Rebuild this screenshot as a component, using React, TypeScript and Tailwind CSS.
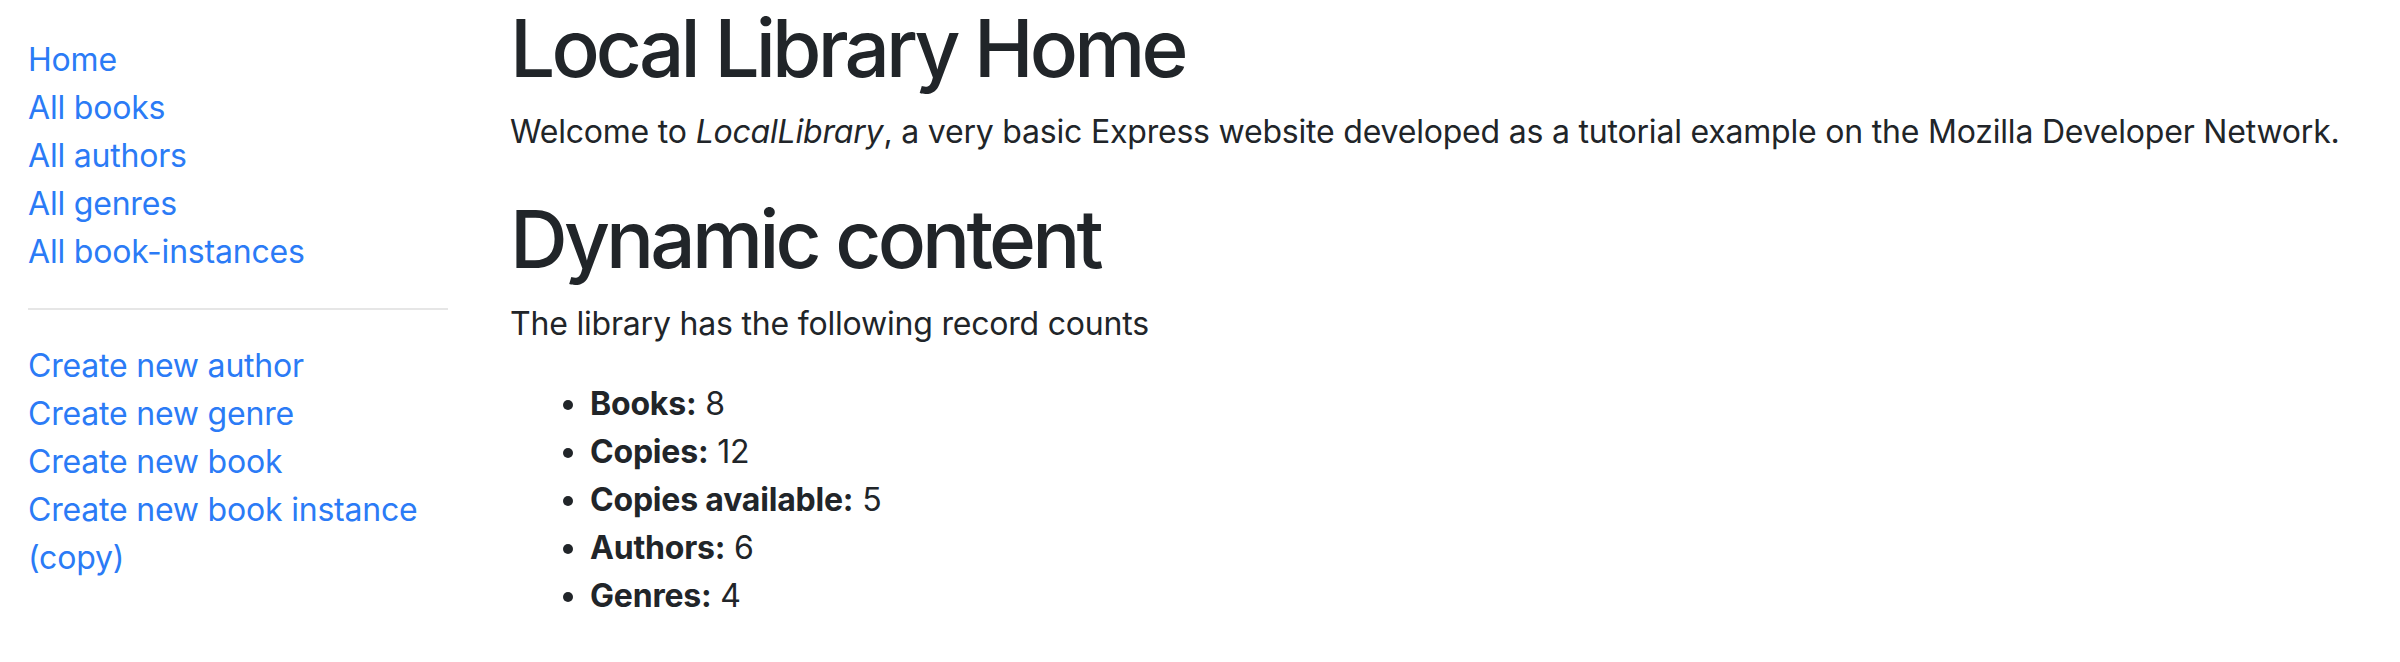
import React from "react";

const browseLinks = ["Home", "All books", "All authors", "All genres", "All book-instances"];
const createLinks = [
  "Create new author",
  "Create new genre",
  "Create new book",
  "Create new book instance (copy)",
];

const counts: { label: string; value: number }[] = [
  { label: "Books:", value: 8 },
  { label: "Copies:", value: 12 },
  { label: "Copies available:", value: 5 },
  { label: "Authors:", value: 6 },
  { label: "Genres:", value: 4 },
];

const LinkList = ({ items }: { items: string[] }) => (
  <ul className="flex flex-col">
    {items.map((item) => (
      <li key={item}>
        <a href="#" className="text-[#2b7bf6] hover:underline">
          {item}
        </a>
      </li>
    ))}
  </ul>
);

export default function App() {
  return (
    <div className="flex min-h-[662px] bg-white font-['Inter','Liberation_Sans',sans-serif] text-[32px] leading-[48px] tracking-[-0.2px] text-[#212529]">
      {/* Sidebar */}
      <nav className="w-[448px] shrink-0 pl-[28px] pt-[36px]">
        <LinkList items={browseLinks} />
        <hr className="my-[32px] border-t-2 border-[#e6e6e6]" />
        <LinkList items={createLinks} />
      </nav>

      {/* Main content */}
      <main className="ml-[62px] flex-1">
        <h1 className="text-[80px] leading-[96px] font-medium tracking-[-0.048em]">
          Local Library Home
        </h1>
        <p className="mt-[12px]">
          Welcome to <em>LocalLibrary</em>, a very basic Express website developed as a tutorial
          example on the Mozilla Developer Network.
        </p>

        <h1 className="mt-[35px] text-[80px] leading-[96px] font-medium tracking-[-0.048em]">
          Dynamic content
        </h1>
        <p className="mt-[13px]">The library has the following record counts</p>

        <ul className="mt-[32px] list-disc pl-[80px]">
          {counts.map((c) => (
            <li key={c.label}>
              <strong className="font-bold">{c.label}</strong> {c.value}
            </li>
          ))}
        </ul>
      </main>
    </div>
  );
}
